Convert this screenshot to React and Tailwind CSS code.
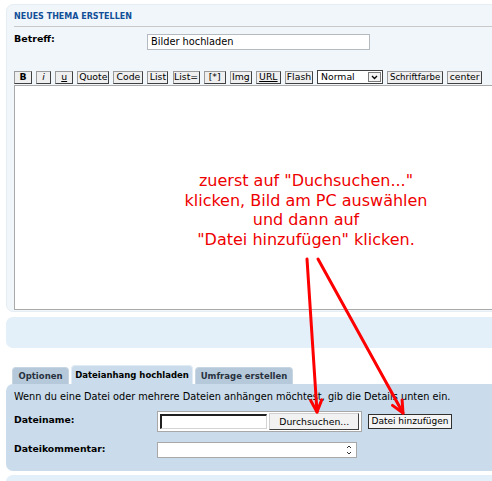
import React from 'react';

const font = { fontFamily: '"DejaVu Sans", Verdana, sans-serif' };

const tools = [
    { label: 'B', w: 'w-[18px]', cls: 'font-bold' },
    { label: 'i', w: 'w-[15px]', cls: 'italic' },
    { label: 'u', w: 'w-[18px]', cls: 'underline' },
    { label: 'Quote', w: 'w-[32px]' },
    { label: 'Code', w: 'w-[30px]' },
    { label: 'List', w: 'w-[21px]' },
    { label: 'List=', w: 'w-[27px]' },
    { label: '[*]', w: 'w-[22px]' },
    { label: 'Img', w: 'w-[22px]' },
    { label: 'URL', w: 'w-[25px]', cls: 'underline' },
    { label: 'Flash', w: 'w-[28px]' },
];

const ToolButton = ({ label, w, cls = '' }) => (
    <button
        type="button"
        className={`${w} h-[13px] flex items-center justify-center bg-[#efefef] border border-t-[#9a9a9a] border-l-[#9a9a9a] border-r-[#404040] border-b-[#404040] text-[9.3px] leading-none text-black whitespace-nowrap ${cls}`}
    >
        {label}
    </button>
);

const Arrows = () => (
    <svg className="absolute inset-0 pointer-events-none" width="492" height="481" viewBox="0 0 492 481">
        <g stroke="#ff0000" strokeWidth="3" fill="none" strokeLinecap="round" strokeLinejoin="round">
            <line x1="307" y1="259" x2="317" y2="412" />
            <polyline points="310.7,400.6 317,412 321.7,399.9" />
            <line x1="318" y1="259" x2="403" y2="413" />
            <polyline points="392.5,405.4 403,413 402.1,400" />
        </g>
    </svg>
);

export default function App() {
    return (
        <div className="relative w-[492px] h-[481px] overflow-hidden bg-white text-black" style={font}>
            {/* post form panel */}
            <div className="mt-[4px] ml-[6px] -mr-[12px] h-[308px] rounded-[7px] bg-[#f1f6fa] border border-[#e6eef5] px-[7px] pt-[6px]">
                <h3 className="text-[8px] font-bold uppercase text-[#115098] leading-[10px] pb-[4px] border-b border-[#c9c9c9] mt-[1px]">
                    Neues Thema erstellen
                </h3>

                <div className="flex mt-[7px] h-[16px]">
                    <label className="w-[133px] text-[9.5px] font-bold leading-[12px] -mt-[1px]">Betreff:</label>
                    <div className="w-[223px] h-[16px] bg-white border border-[#b4bac0] text-[9.8px] leading-[14px] px-[3px]">
                        Bilder hochladen
                    </div>
                </div>

                <div className="flex items-center gap-[4.1px] mt-[20px]">
                    {tools.map((t) => (
                        <ToolButton key={t.label} {...t} />
                    ))}
                    <div className="w-[66px] h-[14px] flex items-center bg-white border border-[#404040] text-[9.3px]">
                        <span className="flex-1 pl-[3px] leading-none">Normal</span>
                        <span className="w-[13px] h-[10px] mr-[1px] flex items-center justify-center border border-[#7a7a7a] bg-[#f4f4f4]">
                            <svg width="7" height="5" viewBox="0 0 7 5">
                                <polyline points="1,1 3.5,3.5 6,1" stroke="#000" strokeWidth="1.3" fill="none" />
                            </svg>
                        </span>
                    </div>
                    <ToolButton label="Schriftfarbe" w="w-[56px]" cls="!text-[8.6px]" />
                    <ToolButton label="center" w="w-[35px]" />
                </div>

                <div className="mt-[1px] h-[225px] bg-white border border-[#a9a9a9] border-r-0">
                    <div className="ml-[131px] w-[320px] pt-[85px] text-center text-[16px] leading-[19.5px] text-[#ee0000]">
                        <p>zuerst auf "Duchsuchen..."</p>
                        <p>klicken, Bild am PC auswählen</p>
                        <p>und dann auf</p>
                        <p>"Datei hinzufügen" klicken.</p>
                    </div>
                </div>
            </div>

            {/* empty options panel */}
            <div className="mt-[5px] ml-[6px] -mr-[12px] h-[31px] rounded-[7px] bg-[#e3eff9]" />

            {/* tabs */}
            <div className="flex items-end gap-[2px] ml-[12px] mt-[17px] h-[19px]">
                <div className="w-[57px] h-[17px] rounded-t-[4px] bg-[#b6c9da] border border-b-0 border-[#c8d6e2] flex items-center justify-center text-[8.5px] font-bold text-[#28313f]">
                    Optionen
                </div>
                <div className="w-[122px] h-[19px] rounded-t-[4px] bg-[#cadceb] border border-b-0 border-[#e2ecf4] flex items-center justify-center text-[8.5px] font-bold text-black">
                    Dateianhang hochladen
                </div>
                <div className="w-[98px] h-[17px] rounded-t-[4px] bg-[#b6c9da] border border-b-0 border-[#c8d6e2] flex items-center justify-center text-[8.5px] font-bold text-[#28313f]">
                    Umfrage erstellen
                </div>
            </div>

            {/* attachment panel */}
            <div className="ml-[6px] -mr-[12px] h-[87px] rounded-[7px] bg-[#cadceb] px-[8px] pt-[7px]">
                <p className="text-[9.75px] leading-[12px] whitespace-nowrap">
                    Wenn du eine Datei oder mehrere Dateien anhängen möchtest, gib die Details unten ein.
                </p>

                <div className="flex items-center mt-[8px] h-[21px]">
                    <label className="w-[143px] text-[9.3px] font-bold -mt-[4px]">Dateiname:</label>
                    <div className="w-[205px] h-[21px] flex items-center gap-[2px] bg-white border border-[#a8a8a8] px-[2px]">
                        <div className="w-[108px] h-[15px] bg-white border-t-2 border-l-2 border-[#202020] border-r border-b border-r-[#d4d4d4] border-b-[#d4d4d4]" />
                        <button
                            type="button"
                            className="w-[90px] h-[17px] bg-[#f2f2f2] border border-[#d0d0d0] border-r-[#404040] border-b-[#404040] text-[9.3px] leading-none"
                        >
                            Durchsuchen...
                        </button>
                    </div>
                    <button
                        type="button"
                        className="ml-[6px] w-[84px] h-[15px] bg-[#f4f4f4] border border-[#303030] text-[9px] leading-none whitespace-nowrap"
                    >
                        Datei hinzufügen
                    </button>
                </div>

                <div className="flex items-center mt-[10px] h-[16px]">
                    <label className="w-[143px] text-[9.3px] font-bold -mt-[2px]">Dateikommentar:</label>
                    <div className="w-[200px] h-[16px] flex justify-end items-center bg-white border border-[#a8a8a8]">
                        <svg className="mr-[4px]" width="6" height="12" viewBox="0 0 6 12">
                            <polyline points="1,4 3,2 5,4" stroke="#333" strokeWidth="1" fill="none" />
                            <polyline points="1,8 3,10 5,8" stroke="#333" strokeWidth="1" fill="none" />
                        </svg>
                    </div>
                </div>
            </div>

            {/* next panel */}
            <div className="mt-[4px] ml-[6px] -mr-[12px] h-[20px] rounded-[7px] bg-[#e3eff9]" />

            <Arrows />
        </div>
    );
}
